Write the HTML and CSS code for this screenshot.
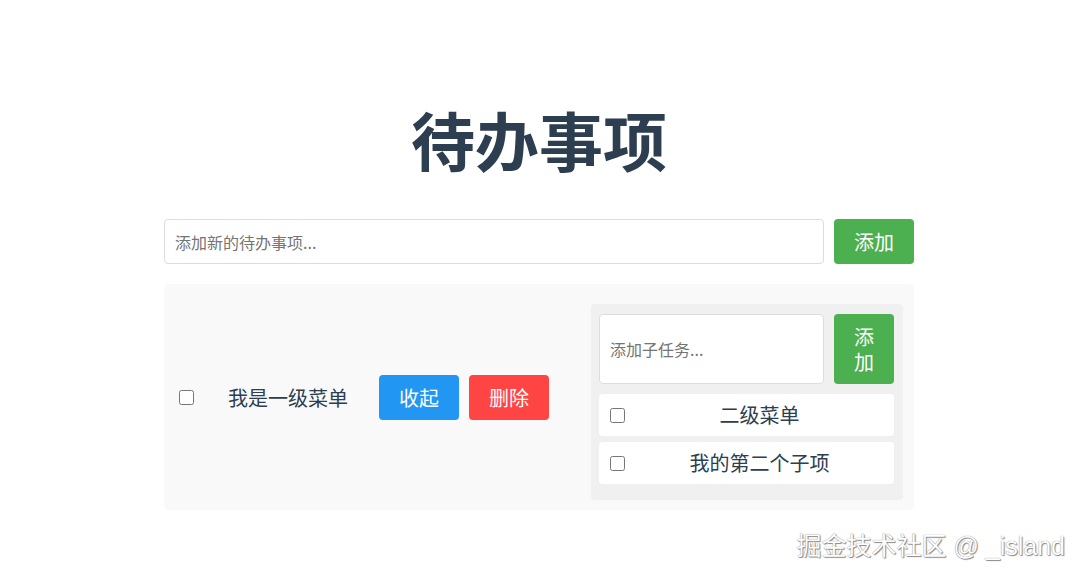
FILE: index.html
```html
<!DOCTYPE html>
<html lang="zh-CN">
<head>
<meta charset="utf-8">
<title>待办事项</title>
<link rel="stylesheet" href="styles.css">
</head>
<body>
<div class="app">
  <h1 class="title">待办事项</h1>
  <div class="add-row">
    <input class="add-input" type="text" placeholder="添加新的待办事项...">
    <button class="btn btn-green">添加</button>
  </div>
  <ul class="todo-list">
    <li class="todo-item">
      <input type="checkbox" class="check">
      <span class="todo-text">我是一级菜单</span>
      <button class="btn btn-blue">收起</button>
      <button class="btn btn-red">删除</button>
      <div class="sub-panel">
        <div class="sub-add">
          <input class="sub-input" type="text" placeholder="添加子任务...">
          <button class="btn btn-green sub-btn">添加</button>
        </div>
        <ul class="sub-list">
          <li class="sub-item"><input type="checkbox" class="check sub-check"><span class="sub-text">二级菜单</span></li>
          <li class="sub-item"><input type="checkbox" class="check sub-check"><span class="sub-text">我的第二个子项</span></li>
        </ul>
      </div>
    </li>
  </ul>
</div>
<div class="watermark">掘金技术社区 @ _island</div>
</body>
</html>
```

FILE: styles.css
```css
html, body {
  margin: 0;
  background: #ffffff;
}
body {
  position: relative;
  height: 580px;
  box-sizing: border-box;
  padding: 106px 6px 0 0;
  overflow: hidden;
  font-family: "Noto Sans CJK SC", sans-serif;
  color: #2c3e50;
}
.app {
  width: 750px;
  margin: 0 auto;
}
.title {
  margin: 0 0 49px;
  font-size: 64px;
  line-height: 64px;
  font-weight: 700;
  text-align: center;
  color: #2c3e50;
}
.add-row {
  display: flex;
  gap: 10px;
  height: 45px;
}
.add-input,
.sub-input {
  flex: 1;
  min-width: 0;
  box-sizing: border-box;
  border: 1px solid #dddddd;
  border-radius: 4px;
  padding: 0 10px;
  font-family: "Noto Sans CJK SC", sans-serif;
  font-size: 16px;
  color: #333;
  background: #fff;
  outline: none;
}
.add-input::placeholder,
.sub-input::placeholder {
  color: #757575;
}
.btn {
  border: none;
  border-radius: 4px;
  padding: 10px 20px;
  font-family: "Noto Sans CJK SC", sans-serif;
  font-size: 20px;
  line-height: 25px;
  color: #ffffff;
  cursor: pointer;
}
.btn-green { background: #4caf50; }
.btn-blue { background: #2196f3; }
.btn-red { background: #ff4444; margin-left: 10px; }
.todo-list {
  list-style: none;
  margin: 20px 0 0;
  padding: 0;
}
.todo-item {
  display: flex;
  align-items: center;
  padding: 10px 11px 10px 10px;
  background: #f9f9f9;
  border-radius: 5px;
}
.check {
  width: 15px;
  height: 15px;
  margin: 0 0 0 5px;
  flex: none;
}
.todo-text {
  margin: 0 31px 0 34px;
  font-size: 20px;
  line-height: 25px;
  color: #2c3e50;
}
.sub-panel {
  flex: 1;
  align-self: stretch;
  margin: 10px 0 0 42px;
  padding: 10px 9px 10px 8px;
  background: #f0f0f0;
  border-radius: 4px;
}
.sub-add {
  display: flex;
  gap: 10px;
}
.sub-btn {
  width: min-content;
}
.sub-list {
  list-style: none;
  margin: 10px 0 0;
  padding: 0;
}
.sub-item {
  display: flex;
  align-items: center;
  background: #ffffff;
  border-radius: 4px;
  padding: 8px 10px 8px 11px;
  margin-bottom: 6px;
  font-size: 20px;
  line-height: 26px;
  color: #2c3e50;
}
.sub-check {
  margin: 0;
}
.sub-text {
  flex: 1;
  margin-left: 10px;
  text-align: center;
}
.watermark {
  position: absolute;
  top: 534px;
  right: 19px;
  font-family: "Liberation Sans", "Noto Sans CJK SC", sans-serif;
  font-size: 25px;
  line-height: 25px;
  color: #ffffff;
  text-shadow: 0 0 1px #666, 1px 1px 1px rgba(0, 0, 0, 0.45);
  white-space: nowrap;
}
```
